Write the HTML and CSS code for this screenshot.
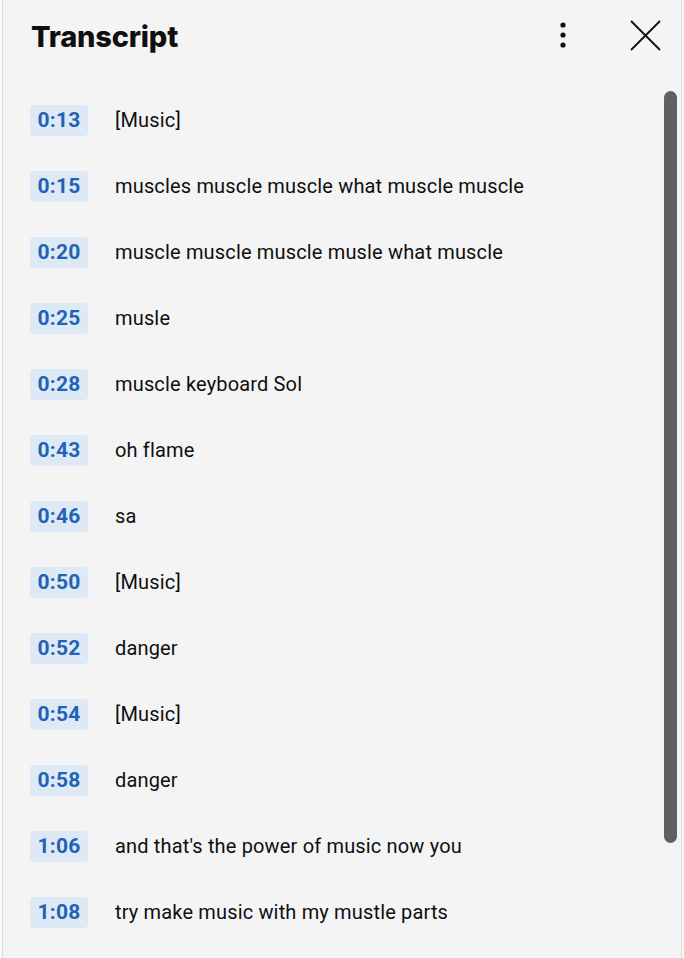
FILE: index.html
```html
<!DOCTYPE html>
<html>
<head>
<meta charset="utf-8">
<link rel="stylesheet" href="styles.css">
</head>
<body>
<div class="panel">
  <div class="header">
    <h1 class="title">Transcript</h1>
    <div class="actions">
      <svg class="kebab" width="12" height="32" viewBox="0 0 12 32"><circle cx="6" cy="5" r="2.6"/><circle cx="6" cy="15" r="2.6"/><circle cx="6" cy="25" r="2.6"/></svg>
      <svg class="close" width="34" height="34" viewBox="0 0 34 34"><path d="M2 2 L31 31 M31 2 L2 31"/></svg>
    </div>
  </div>
  <div class="list">
    <div class="row"><span class="ts">0:13</span><span class="txt">[Music]</span></div>
    <div class="row"><span class="ts">0:15</span><span class="txt">muscles muscle muscle what muscle muscle</span></div>
    <div class="row"><span class="ts">0:20</span><span class="txt">muscle muscle muscle musle what muscle</span></div>
    <div class="row"><span class="ts">0:25</span><span class="txt">musle</span></div>
    <div class="row"><span class="ts">0:28</span><span class="txt">muscle keyboard Sol</span></div>
    <div class="row"><span class="ts">0:43</span><span class="txt">oh flame</span></div>
    <div class="row"><span class="ts">0:46</span><span class="txt">sa</span></div>
    <div class="row"><span class="ts">0:50</span><span class="txt">[Music]</span></div>
    <div class="row"><span class="ts">0:52</span><span class="txt">danger</span></div>
    <div class="row"><span class="ts">0:54</span><span class="txt">[Music]</span></div>
    <div class="row"><span class="ts">0:58</span><span class="txt">danger</span></div>
    <div class="row"><span class="ts">1:06</span><span class="txt">and that's the power of music now you</span></div>
    <div class="row"><span class="ts">1:08</span><span class="txt">try make music with my mustle parts</span></div>
  </div>
  <div class="thumb"></div>
</div>
</body>
</html>
```
FILE: styles.css
```css
html, body {
  margin: 0;
  padding: 0;
  background: #fafafa;
}
.panel {
  position: relative;
  box-sizing: border-box;
  margin-left: 2px;
  width: 680px;
  height: 958px;
  overflow: hidden;
  background: #f4f4f4;
  border-left: 1px solid #dcdcdc;
  border-right: 1px solid #dcdcdc;
  font-family: Roboto, "Liberation Sans", sans-serif;
}
.header {
  display: flex;
  align-items: center;
  justify-content: space-between;
  height: 72px;
  padding: 0 18px 0 28px;
}
.title {
  margin: 0;
  font-family: Inter, "Noto Sans", sans-serif;
  font-weight: 800;
  font-size: 29px;
  letter-spacing: -0.2px;
  color: #0f0f0f;
}
.actions {
  display: flex;
  align-items: center;
  gap: 60px;
}
.kebab circle { fill: #0f0f0f; }
.close path {
  stroke: #0f0f0f;
  stroke-width: 1.8;
  fill: none;
}
.list {
  padding-top: 15px;
}
.row {
  display: flex;
  align-items: center;
  height: 66px;
  padding-left: 27px;
}
.ts {
  box-sizing: border-box;
  width: 58px;
  height: 31px;
  line-height: 31px;
  text-align: center;
  border-radius: 4px;
  background: #dee9f6;
  color: #1f63b6;
  font-weight: 700;
  font-size: 21px;
  letter-spacing: 0.2px;
}
.txt {
  margin-left: 27px;
  font-size: 20px;
  letter-spacing: 0.16px;
  color: #0f0f0f;
}
.thumb {
  position: absolute;
  left: 661px;
  top: 91px;
  width: 13px;
  height: 752px;
  border-radius: 7px;
  background: #606060;
}
```
